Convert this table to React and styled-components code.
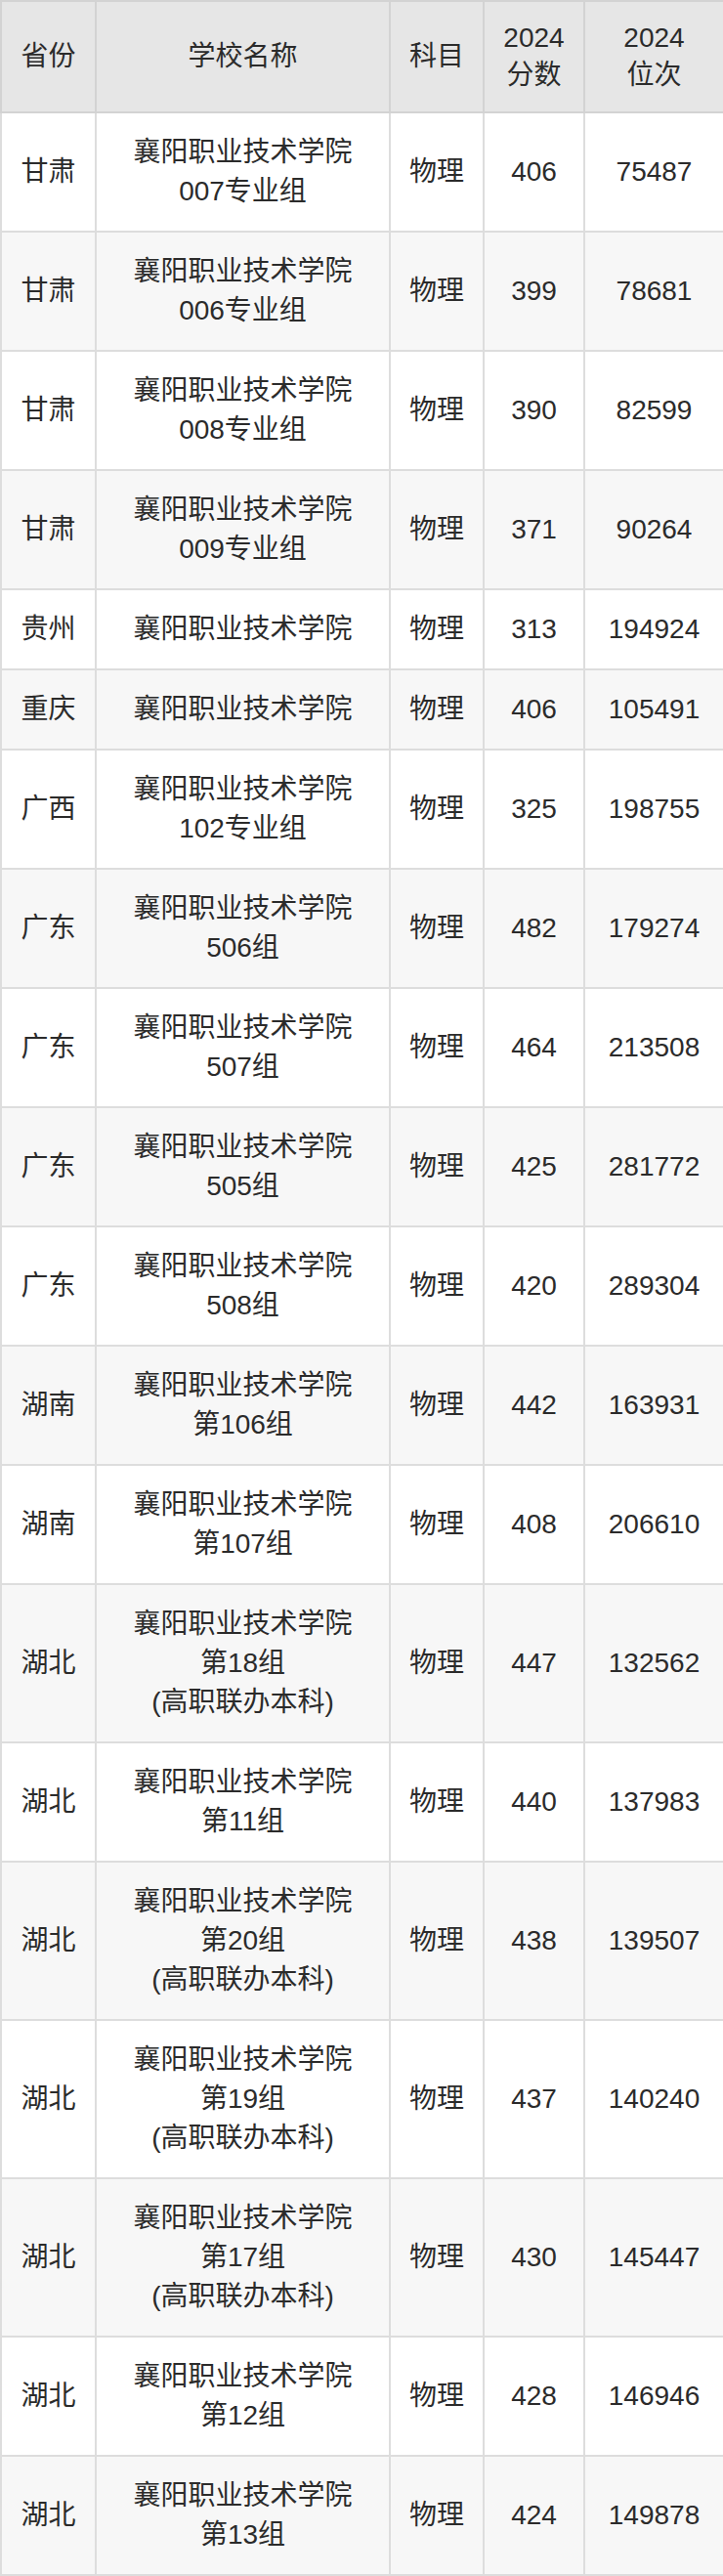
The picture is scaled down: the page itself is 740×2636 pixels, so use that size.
import React from 'react';
import styled, { createGlobalStyle } from 'styled-components';

const GlobalStyle = createGlobalStyle`
  html, body {
    margin: 0;
    padding: 0;
    background: #ffffff;
  }
  body {
    font-family: "Liberation Sans", "Noto Sans CJK SC", sans-serif;
    color: #2b2b2b;
  }
`;

const Table = styled.table`
  width: 740px;
  border-collapse: collapse;
  table-layout: fixed;
  font-size: 28px;
  text-align: center;
`;

const HeadCell = styled.th`
  background-color: #e6e6e6;
  border: 2px solid #d3d3d3;
  font-weight: 400;
  line-height: 38px;
  padding: 18px 4px;
  vertical-align: middle;
`;

const Row = styled.tr`
  background-color: ${(p) => (p.$striped ? '#f7f7f7' : '#ffffff')};
`;

const Cell = styled.td`
  border: 2px solid #dddddd;
  line-height: 40px;
  padding: 20px 4px;
  vertical-align: middle;
`;

const Line = styled.div`
  white-space: nowrap;
`;

const SCHOOL = '襄阳职业技术学院';
const JOINT = '(高职联办本科)';

const rows = [
  ['甘肃', [SCHOOL, '007专业组'], '406', '75487'],
  ['甘肃', [SCHOOL, '006专业组'], '399', '78681'],
  ['甘肃', [SCHOOL, '008专业组'], '390', '82599'],
  ['甘肃', [SCHOOL, '009专业组'], '371', '90264'],
  ['贵州', [SCHOOL], '313', '194924'],
  ['重庆', [SCHOOL], '406', '105491'],
  ['广西', [SCHOOL, '102专业组'], '325', '198755'],
  ['广东', [SCHOOL, '506组'], '482', '179274'],
  ['广东', [SCHOOL, '507组'], '464', '213508'],
  ['广东', [SCHOOL, '505组'], '425', '281772'],
  ['广东', [SCHOOL, '508组'], '420', '289304'],
  ['湖南', [SCHOOL, '第106组'], '442', '163931'],
  ['湖南', [SCHOOL, '第107组'], '408', '206610'],
  ['湖北', [SCHOOL, '第18组', JOINT], '447', '132562'],
  ['湖北', [SCHOOL, '第11组'], '440', '137983'],
  ['湖北', [SCHOOL, '第20组', JOINT], '438', '139507'],
  ['湖北', [SCHOOL, '第19组', JOINT], '437', '140240'],
  ['湖北', [SCHOOL, '第17组', JOINT], '430', '145447'],
  ['湖北', [SCHOOL, '第12组'], '428', '146946'],
  ['湖北', [SCHOOL, '第13组'], '424', '149878'],
];

const App = () => {
  return (
    <>
      <GlobalStyle />
      <Table>
        <colgroup>
          <col style={{ width: 97 }} />
          <col style={{ width: 301 }} />
          <col style={{ width: 96 }} />
          <col style={{ width: 103 }} />
          <col style={{ width: 143 }} />
        </colgroup>
        <thead>
          <tr>
            <HeadCell>省份</HeadCell>
            <HeadCell>学校名称</HeadCell>
            <HeadCell>科目</HeadCell>
            <HeadCell>
              <Line>2024</Line>
              <Line>分数</Line>
            </HeadCell>
            <HeadCell>
              <Line>2024</Line>
              <Line>位次</Line>
            </HeadCell>
          </tr>
        </thead>
        <tbody>
          {rows.map(([province, name, score, rank], i) => (
            <Row key={i} $striped={i % 2 === 1}>
              <Cell>{province}</Cell>
              <Cell>
                {name.map((line, j) => (
                  <Line key={j}>{line}</Line>
                ))}
              </Cell>
              <Cell>物理</Cell>
              <Cell>{score}</Cell>
              <Cell>{rank}</Cell>
            </Row>
          ))}
        </tbody>
      </Table>
    </>
  );
};

export default App;
